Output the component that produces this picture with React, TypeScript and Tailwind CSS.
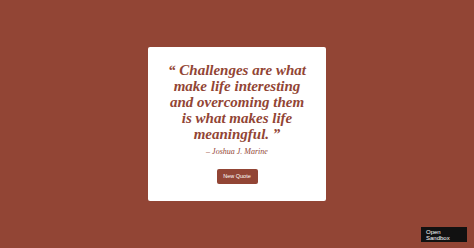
import React, { useState } from 'react';

const quotes = [
  { text: 'Challenges are what make life interesting and overcoming them is what makes life meaningful.', author: 'Joshua J. Marine' },
];

export default function App() {
  const [idx, setIdx] = useState(0);
  const q = quotes[idx];

  return (
    <div className="relative w-full h-screen bg-[#924535] flex items-center justify-center">
      <div className="w-[178px] h-[154px] bg-white rounded-[2px] flex flex-col items-center px-[20px] pt-[15px] font-['Liberation_Serif',serif]">
        <p className="text-center text-[#924535] text-[15px] leading-[16px] font-bold italic">
          “ {q.text} ”
        </p>
        <p className="mt-[5px] text-[#924535] text-[8px] leading-[10px] italic">
          – {q.author}
        </p>
        <button
          onClick={() => setIdx((idx + 1) % quotes.length)}
          className="mt-[12px] w-[41px] h-[15px] bg-[#924535] text-white text-[5.5px] rounded-[2px] font-['Liberation_Sans',sans-serif]"
        >
          New Quote
        </button>
      </div>
      <div className="absolute right-[7px] bottom-[6px] w-[46px] h-[15px] bg-[#111] text-white text-[6px] leading-[6px] px-[5px] pt-[1.5px] font-['Liberation_Sans',sans-serif]">
        Open<br />Sandbox
      </div>
    </div>
  );
}
